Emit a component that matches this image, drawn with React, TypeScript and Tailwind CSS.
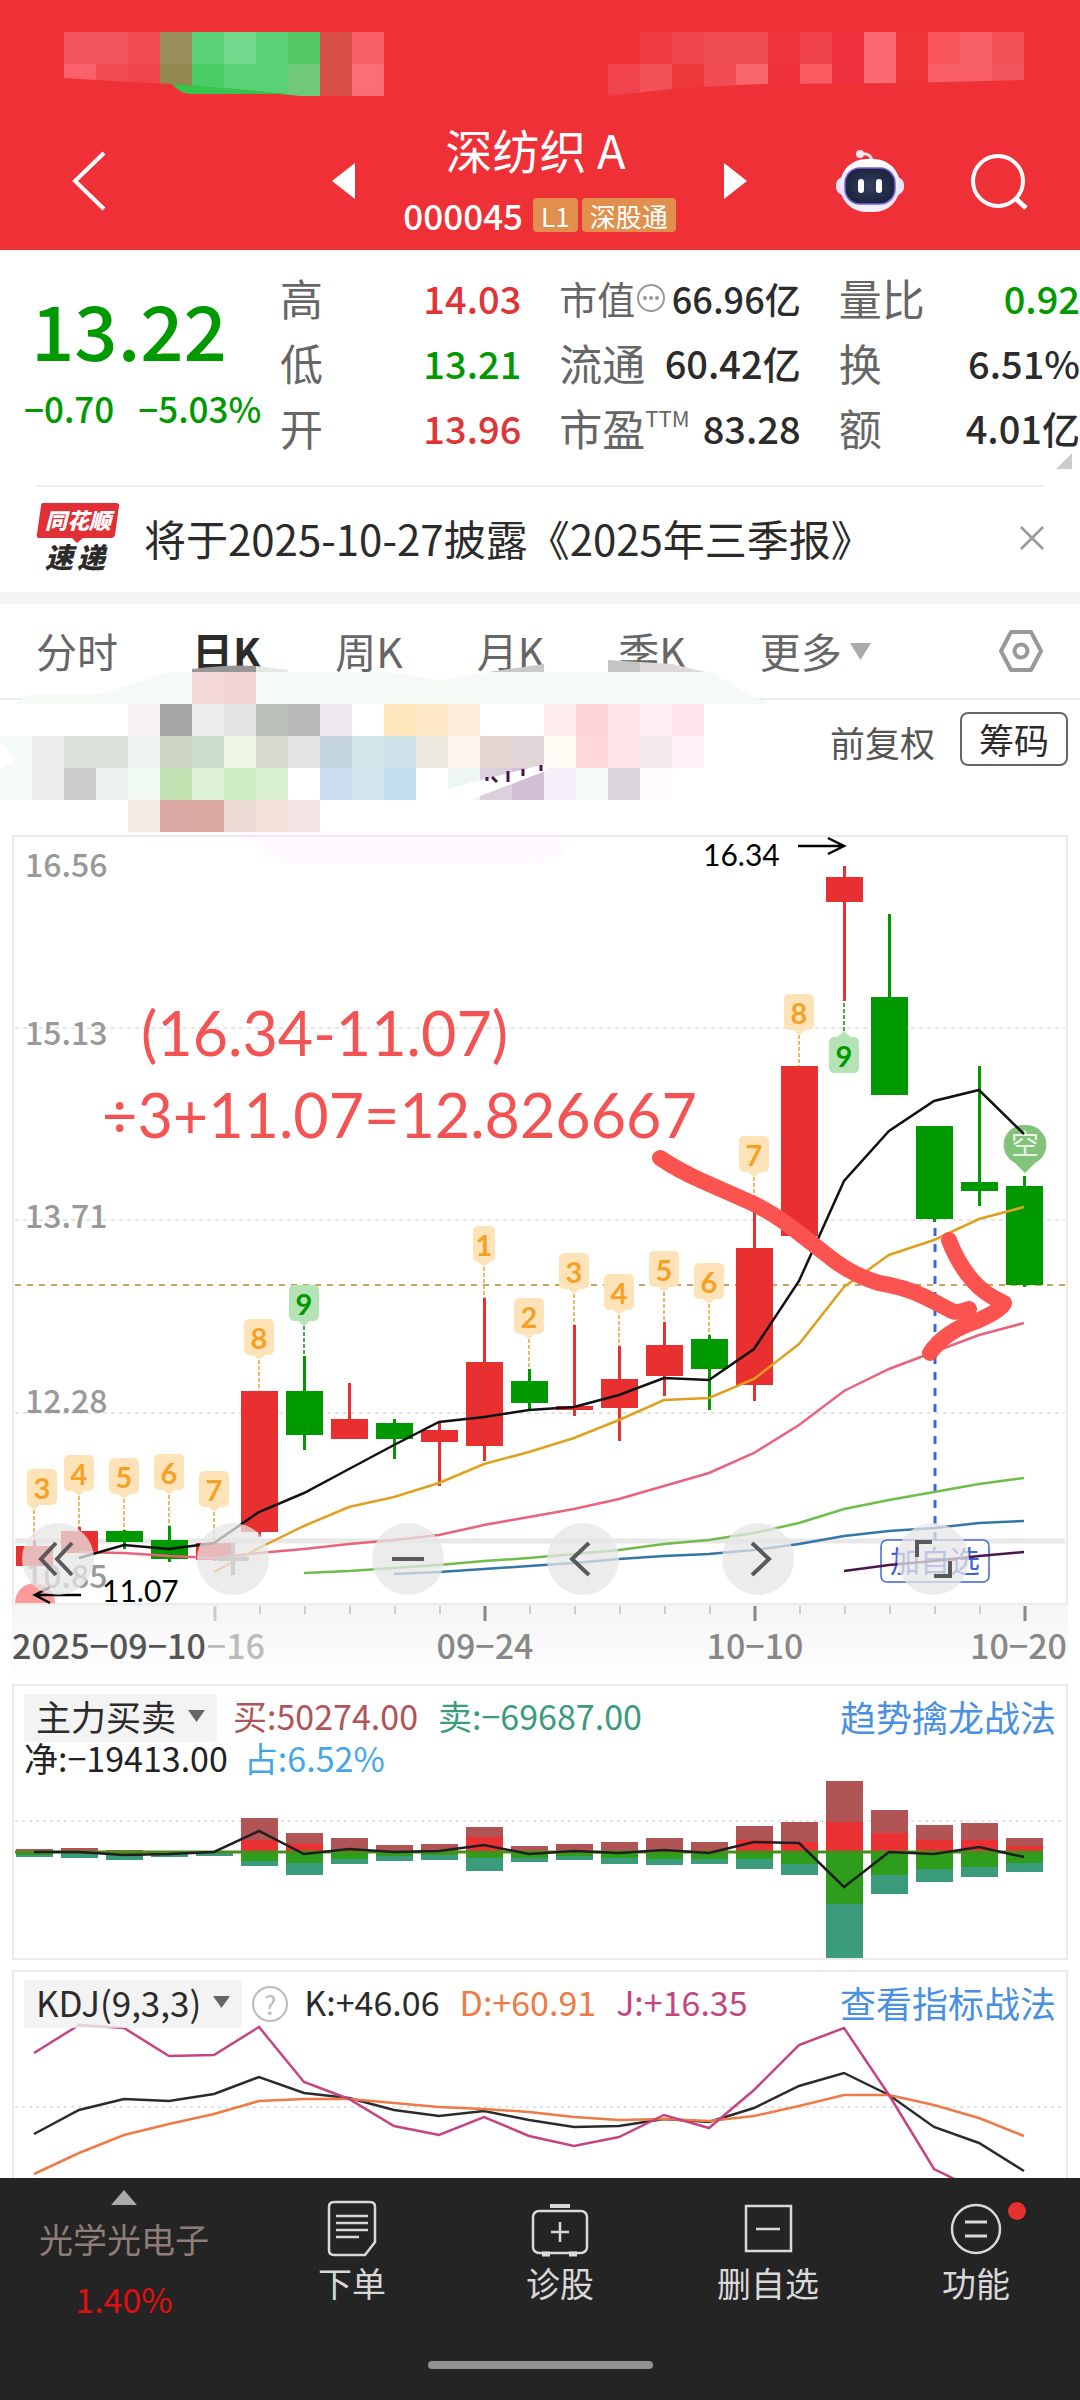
import type { ReactNode } from "react";

type Candle = { up: boolean; top: number; bottom: number; high: number; low: number };
type Tag = { i: number; n: number; y: number; to: number; green?: boolean; flip?: boolean };
type Bar = { buy: number; bigBuy: number; bigSell: number; sell: number };

const STEP = 45;
const BODY = 37;
const xAt = (i: number) => 34 + i * STEP;
const points = (ys: number[], from = 0) => ys.map((y, i) => `${xAt(i + from)},${y}`).join(" ");

const candles: Candle[] = [
  { up: true, top: 1546, bottom: 1566, high: 1540, low: 1566 },
  { up: true, top: 1531, bottom: 1553, high: 1527, low: 1553 },
  { up: false, top: 1531, bottom: 1542, high: 1530, low: 1549 },
  { up: false, top: 1540, bottom: 1559, high: 1526, low: 1562 },
  { up: true, top: 1543, bottom: 1560, high: 1543, low: 1561 },
  { up: true, top: 1391, bottom: 1532, high: 1391, low: 1537 },
  { up: false, top: 1391, bottom: 1435, high: 1356, low: 1450 },
  { up: true, top: 1419, bottom: 1439, high: 1383, low: 1439 },
  { up: false, top: 1423, bottom: 1439, high: 1419, low: 1459 },
  { up: true, top: 1430, bottom: 1442, high: 1423, low: 1486 },
  { up: true, top: 1362, bottom: 1446, high: 1298, low: 1461 },
  { up: false, top: 1381, bottom: 1403, high: 1369, low: 1409 },
  { up: true, top: 1406, bottom: 1410, high: 1325, low: 1416 },
  { up: true, top: 1379, bottom: 1408, high: 1346, low: 1441 },
  { up: true, top: 1345, bottom: 1376, high: 1322, low: 1396 },
  { up: false, top: 1339, bottom: 1369, high: 1335, low: 1410 },
  { up: true, top: 1248, bottom: 1385, high: 1212, low: 1401 },
  { up: true, top: 1066, bottom: 1236, high: 1066, low: 1236 },
  { up: true, top: 877, bottom: 902, high: 866, low: 1001 },
  { up: false, top: 997, bottom: 1095, high: 914, low: 1095 },
  { up: false, top: 1126, bottom: 1219, high: 1126, low: 1222 },
  { up: false, top: 1182, bottom: 1191, high: 1066, low: 1206 },
  { up: false, top: 1186, bottom: 1285, high: 1176, low: 1287 },
];

const averages = [
  { color: "#e8637b", from: 1, ys: [1552, 1553, 1556, 1558, 1553, 1549, 1544, 1540, 1535, 1525, 1517, 1509, 1499, 1486, 1473, 1453, 1425, 1391, 1369, 1352, 1335, 1323] },
  { color: "#6fbe4b", from: 6, ys: [1573, 1571, 1568, 1565, 1561, 1558, 1554, 1550, 1544, 1540, 1533, 1523, 1509, 1500, 1492, 1484, 1478] },
  { color: "#3376a8", from: 8, ys: [1574, 1572, 1569, 1566, 1563, 1559, 1556, 1554, 1550, 1544, 1536, 1531, 1528, 1523, 1521] },
  { color: "#4a154b", from: 18, ys: [1571, 1565, 1561, 1556, 1552] },
  { color: "#e0a020", from: 4, ys: [1572, 1548, 1526, 1507, 1497, 1483, 1464, 1452, 1438, 1420, 1400, 1398, 1379, 1344, 1287, 1255, 1240, 1219, 1207] },
  { color: "#111111", from: 1, ys: [1558, 1545, 1549, 1543, 1512, 1493, 1469, 1445, 1422, 1417, 1410, 1407, 1395, 1378, 1380, 1349, 1281, 1181, 1131, 1101, 1090, 1134] },
];

const tags: Tag[] = [
  { i: 0, n: 3, y: 1469, to: 1540 },
  { i: 1, n: 4, y: 1455, to: 1527 },
  { i: 2, n: 5, y: 1458, to: 1530 },
  { i: 3, n: 6, y: 1454, to: 1526 },
  { i: 4, n: 7, y: 1471, to: 1543 },
  { i: 5, n: 8, y: 1319, to: 1391 },
  { i: 6, n: 9, y: 1285, to: 1356, green: true },
  { i: 10, n: 1, y: 1226, to: 1298 },
  { i: 11, n: 2, y: 1298, to: 1369 },
  { i: 12, n: 3, y: 1253, to: 1325 },
  { i: 13, n: 4, y: 1274, to: 1346 },
  { i: 14, n: 5, y: 1251, to: 1322 },
  { i: 15, n: 6, y: 1263, to: 1335 },
  { i: 16, n: 7, y: 1136, to: 1212 },
  { i: 17, n: 8, y: 994, to: 1066 },
  { i: 18, n: 9, y: 1037, to: 1001, green: true, flip: true },
];

const bars: Bar[] = [
  { buy: 1849, bigBuy: 1852, bigSell: 1855, sell: 1857 },
  { buy: 1848, bigBuy: 1851, bigSell: 1854, sell: 1858 },
  { buy: 1850, bigBuy: 1852, bigSell: 1855, sell: 1860 },
  { buy: 1851, bigBuy: 1852, bigSell: 1854, sell: 1857 },
  { buy: 1851, bigBuy: 1852, bigSell: 1853, sell: 1856 },
  { buy: 1818, bigBuy: 1840, bigSell: 1861, sell: 1866 },
  { buy: 1833, bigBuy: 1844, bigSell: 1863, sell: 1875 },
  { buy: 1838, bigBuy: 1850, bigSell: 1859, sell: 1864 },
  { buy: 1845, bigBuy: 1851, bigSell: 1856, sell: 1861 },
  { buy: 1844, bigBuy: 1851, bigSell: 1855, sell: 1860 },
  { buy: 1827, bigBuy: 1837, bigSell: 1858, sell: 1871 },
  { buy: 1846, bigBuy: 1851, bigSell: 1858, sell: 1862 },
  { buy: 1844, bigBuy: 1850, bigSell: 1856, sell: 1860 },
  { buy: 1842, bigBuy: 1851, bigSell: 1858, sell: 1864 },
  { buy: 1838, bigBuy: 1850, bigSell: 1859, sell: 1865 },
  { buy: 1842, bigBuy: 1850, bigSell: 1859, sell: 1864 },
  { buy: 1826, bigBuy: 1840, bigSell: 1859, sell: 1869 },
  { buy: 1822, bigBuy: 1842, bigSell: 1864, sell: 1875 },
  { buy: 1781, bigBuy: 1822, bigSell: 1904, sell: 1958 },
  { buy: 1810, bigBuy: 1833, bigSell: 1875, sell: 1894 },
  { buy: 1825, bigBuy: 1840, bigSell: 1869, sell: 1882 },
  { buy: 1823, bigBuy: 1840, bigSell: 1867, sell: 1877 },
  { buy: 1838, bigBuy: 1846, bigSell: 1863, sell: 1872 },
];
const netFlow = [1852, 1852, 1855, 1854, 1852, 1831, 1854, 1849, 1852, 1851, 1845, 1854, 1851, 1853, 1850, 1853, 1842, 1843, 1887, 1852, 1854, 1847, 1857];

const kdj = [
  { color: "#2b2b2b", ys: [2134, 2110, 2099, 2101, 2094, 2077, 2093, 2098, 2110, 2116, 2111, 2120, 2127, 2126, 2119, 2122, 2108, 2086, 2073, 2095, 2127, 2143, 2171] },
  { color: "#ee7a45", ys: [2174, 2153, 2135, 2124, 2114, 2101, 2099, 2099, 2103, 2107, 2109, 2112, 2117, 2120, 2119, 2121, 2116, 2106, 2095, 2095, 2105, 2118, 2136] },
  { color: "#c64580", ys: [2053, 2025, 2028, 2056, 2055, 2027, 2082, 2099, 2126, 2135, 2117, 2136, 2146, 2137, 2115, 2128, 2090, 2045, 2028, 2095, 2169, 2191, 2200] },
];

// One colour per 32px block, null leaves the block empty
const statusLeft = [
  ["#f2565c", "#f2565c", "#f04b52", "#9a8f5c", "#5bd177", "#73da8d", "#5bd177", "#54c765", "#d74f46", "#f95f66"],
  ["#f9626a", "#f04c52", "#f0434a", "#948850", "#4acd66", "#5bd177", "#5bd177", "#70c97b", "#d74f46", "#fa6e76"],
];
const statusRight = [
  [null, "#f03a41", "#f0464d", "#f04d53", "#f04d53", "#ee363c", "#ef4148", "#ee303d", "#fb6a70", "#ee3439", "#f9575d", "#f96066", "#f35057"],
  ["#f0434b", "#f25258", "#ee383c", "#f14c52", "#f96669", "#ee303a", "#f95b61", "#ee303d", "#fb6a70", "#ee3439", "#f95f66", "#f95f66", "#f2555c"],
];
const legendBlocks = [
  [null, null, null, null, null, null, "#f6dadb", "#f4d3d3"],
  [null, null, null, null, "#f6f2f6", "#a7a5a8", "#ededee", "#e3e4e4", "#bac1ba", "#b9b8ba", "#eee8ee", null, "#fee6bd", "#fde7c5", "#fdedda", null, null, "#feeced", "#ffd3da", "#ffe6eb", "#fff0f4", "#fee6ec"],
  ["#f5fbf8", "#eeeeee", "#dae1da", "#dae1da", "#edf3ee", "#cdd5c4", "#cdddcb", "#edf6e5", "#d6d9cb", "#e4e4e5", "#c3d4dc", "#d3e5eb", "#cfe2ea", "#ebe9de", "#fef4ee", "#e5d5cf", "#e3d6d9", "#fffaf4", "#ffd8dd", "#ffe6ea", "#f5eaef", "#fff1f5"],
  ["#f5fbf8", "#eeeeee", "#cccccc", "#ebf1ed", "#f0faf0", "#c3e4b2", "#dcf1d6", "#cdedc4", "#daf1d2", null, "#cbdeef", "#d5e6ef", "#c2ddee", null, "#edf6f5", "#dccfde", "#d3bfd5", "#f5edf7", "#f5fbf8", "#dbd4dc", "#fffbff"],
  [null, null, null, null, "#f5e9e6", "#dba8a4", "#dba99f", "#ebdad3", "#f4e1da", "#f5e4e5"],
];

function Blocks({ rows, x, y }: { rows: (string | null)[][]; x: number; y: number }) {
  return (
    <g shapeRendering="crispEdges">
      {rows.map((row, r) =>
        row.map((fill, c) => fill && <rect key={`${r}-${c}`} x={x + c * 32} y={y + r * 32} width="32" height="32" fill={fill} />)
      )}
    </g>
  );
}

function Header() {
  return (
    <header className="bg-[#f03037] text-white">
      <svg viewBox="0 0 1080 112" className="block w-full" aria-hidden="true">
        <Blocks rows={statusLeft} x={64} y={32} />
        <Blocks rows={statusRight} x={608} y={32} />
        <path d="M64 78 L128 82 L172 84 L250 91 L310 97 H64Z" fill="#f03037" />
        <path d="M172 84 Q180 94 192 94 H290 L310 96 L250 90 Z" fill="#36c44c" />
        <path d="M608 96 L680 88 L760 84 L900 83 L1024 80 V98 H608Z" fill="#f03037" />
      </svg>
      <div className="flex h-[138px]">
        <div className="flex w-[355px] items-center justify-between pl-[72px]">
          <button aria-label="返回">
            <svg width="34" height="60" viewBox="0 0 34 60" fill="none" stroke="#fff" strokeWidth="4">
              <path d="M32 2 L3 30 L32 58" />
            </svg>
          </button>
          <button aria-label="上一只">
            <svg width="23" height="36" viewBox="0 0 23 36" fill="#fff"><path d="M23 0 V36 L0 18Z" /></svg>
          </button>
        </div>
        <div className="flex flex-1 flex-col items-center pt-1">
          <h1 className="pr-2 text-[47px] leading-[66px]">深纺织 A</h1>
          <div className="mt-4 flex h-[34px] items-center gap-1">
            <span className="mr-1.5 text-[35px] font-medium">000045</span>
            <span className="flex h-[34px] items-center rounded bg-[#e0904c] px-2 text-[26px]">L1</span>
            <span className="flex h-[34px] items-center rounded bg-[#e0904c] px-2 text-[26px]">深股通</span>
          </div>
        </div>
        <div className="flex w-[356px] items-center">
          <button aria-label="下一只">
            <svg width="23" height="36" viewBox="0 0 23 36" fill="#fff"><path d="M0 0 V36 L23 18Z" /></svg>
          </button>
          <button aria-label="智能助手" className="ml-[89px]">
            <svg width="68" height="64" viewBox="0 0 68 64">
              <defs>
                <linearGradient id="shell" x1="0" y1="0" x2="0" y2="1">
                  <stop offset="0" stopColor="#ffffff" />
                  <stop offset="0.7" stopColor="#e6e2fa" />
                  <stop offset="1" stopColor="#f7f1fb" />
                </linearGradient>
                <radialGradient id="visor">
                  <stop offset="0" stopColor="#34405c" />
                  <stop offset="1" stopColor="#1b2540" />
                </radialGradient>
              </defs>
              <path d="M24 5 Q36 3 36 14" fill="none" stroke="#f5e3ea" strokeWidth="3" />
              <circle cx="24" cy="5" r="4" fill="#fbe9ee" />
              <rect x="0" y="28" width="68" height="18" rx="8" fill="#e9e4fa" />
              <rect x="4" y="10" width="60" height="53" rx="26" fill="url(#shell)" />
              <rect x="9" y="19" width="50" height="36" rx="15" fill="url(#visor)" stroke="#7a63d8" strokeWidth="1.5" />
              <rect x="22" y="30" width="6" height="14" rx="3" fill="#fff" />
              <rect x="40" y="30" width="6" height="14" rx="3" fill="#fff" />
            </svg>
          </button>
          <button aria-label="搜索" className="ml-[66px]">
            <svg width="58" height="58" viewBox="0 0 58 58" fill="none" stroke="#fff" strokeWidth="4">
              <circle cx="28" cy="29" r="25" />
              <path d="M45 46 L56 56" strokeWidth="5" />
            </svg>
          </button>
        </div>
      </div>
    </header>
  );
}

function Stat({ label, value, color = "text-[#2b2b2b]", small = false }: { label: ReactNode; value: string; color?: string; small?: boolean }) {
  return (
    <div className="flex h-[65px] items-center justify-between whitespace-nowrap">
      <dt className={`flex items-center text-[#666] ${small ? "text-[38px]" : "text-[43px]"}`}>{label}</dt>
      <dd className={`font-medium ${small ? "text-[36px]" : "text-[38px]"} ${color}`}>{value}</dd>
    </div>
  );
}

function Quote() {
  return (
    <section className="relative flex h-[235px]">
      <div className="w-[280px] pt-7 text-[#009900]">
        <div className="pl-[31px] text-[76px] font-medium leading-[100px]">13.22</div>
        <div className="flex gap-6 pl-6 text-[35px] font-medium leading-[60px]">
          <span>−0.70</span>
          <span>−5.03%</span>
        </div>
      </div>
      <dl className="flex flex-1 gap-[38px] pt-[15px]">
        <div className="flex-1">
          <Stat label="高" value="14.03" color="text-[#e03437]" />
          <Stat label="低" value="13.21" color="text-[#009900]" />
          <Stat label="开" value="13.96" color="text-[#e03437]" />
        </div>
        <div className="flex-1">
          <Stat
            small
            value="66.96亿"
            label={
              <>
                市值
                <svg width="28" height="32" viewBox="0 0 28 32" className="ml-0.5">
                  <circle cx="14" cy="16" r="13" fill="none" stroke="#999" strokeWidth="2" />
                  <circle cx="8" cy="16" r="2" fill="#999" />
                  <circle cx="14" cy="16" r="2" fill="#999" />
                  <circle cx="20" cy="16" r="2" fill="#999" />
                </svg>
              </>
            }
          />
          <Stat label="流通" value="60.42亿" />
          <Stat label={<>市盈<sup className="text-[22px]">TTM</sup></>} value="83.28" />
        </div>
        <div className="flex-1">
          <Stat label="量比" value="0.92" color="text-[#009900]" />
          <Stat label="换" value="6.51%" />
          <Stat label="额" value="4.01亿" />
        </div>
      </dl>
      <svg width="16" height="16" viewBox="0 0 16 16" className="absolute bottom-4 right-2"><path d="M16 0 V16 H0Z" fill="#ccc" /></svg>
    </section>
  );
}

function Notice() {
  return (
    <section className="mx-9 flex h-[107px] items-center border-t-2 border-[#efefef] pb-1">
      <svg width="84" height="76" viewBox="0 0 84 76" className="overflow-visible font-black italic" role="img" aria-label="同花顺速递">
        <path d="M7 3 H80 Q84 3 83 6 L79 35 Q78 38 75 38 H47 L41 43 L36 38 H4 Q0 38 1 34 L5 6 Q5 3 7 3Z" fill="#e22f35" />
        <text x="9" y="29" fontSize="22" fill="#fff">同花顺</text>
        <text x="9" y="68" fontSize="28" fill="#2b2b2b">速</text>
        <text x="41" y="68" fontSize="28" fill="#2b2b2b">递</text>
      </svg>
      <p className="ml-6 flex-1 whitespace-nowrap text-[42px] leading-[60px] text-[#2b2b2b]">将于2025-10-27披露《2025年三季报》</p>
      <button aria-label="关闭">
        <svg width="24" height="24" viewBox="0 0 24 24" stroke="#999" strokeWidth="2.5"><path d="M1 1 L23 23 M23 1 L1 23" /></svg>
      </button>
    </section>
  );
}

function Periods() {
  return (
    <nav className="flex h-24 items-center border-b-2 border-[#ebebeb] px-9 text-[41px] text-[#666]">
      <div className="flex flex-1 gap-[74px] whitespace-nowrap">
        <button>分时</button>
        <button className="font-bold text-[#2b2b2b]">日K</button>
        <button>周K</button>
        <button>月K</button>
        <button>季K</button>
        <button className="flex items-center gap-2">
          更多
          <svg width="21" height="17" viewBox="0 0 21 17" fill="#aaa"><path d="M0 0 H21 L10.5 17Z" /></svg>
        </button>
      </div>
      <button aria-label="设置">
        <svg width="46" height="44" viewBox="0 0 46 44" fill="none" stroke="#999" strokeWidth="4" strokeLinejoin="round">
          <path d="M13 3 H33 L43 22 L33 41 H13 L3 22Z" />
          <circle cx="23" cy="22" r="6.5" />
        </svg>
      </button>
    </nav>
  );
}

function ChartLegend() {
  return (
    <div className="flex h-[135px] items-start justify-end gap-[25px] pr-3 pt-3 text-[35px]">
      <span className="leading-[60px] text-[#555]">前复权</span>
      <button className="h-[54px] rounded-lg border-2 border-[#666] px-[17px] leading-[48px] text-[#2b2b2b]">筹码</button>
    </div>
  );
}

// Pixel blocks and brush marks lying over the tabs and the legend
function LegendCover() {
  return (
    <svg viewBox="0 604 1080 270" className="pointer-events-none absolute left-0 top-0 w-full" aria-hidden="true">
      <path d="M14 704 L28 695 H95 L130 685 L170 672 H385 L440 680 L490 672 H712 L740 690 L770 704Z" fill="#f5faf7" />
      <path d="M192 672 V669 Q230 664 256 666 V672Z" fill="#979797" />
      <path d="M256 672 V666 L288 670 V672Z" fill="#e3e8e5" />
      <path d="M488 672 L544 664 V672Z" fill="#c9c9c9" />
      <path d="M608 672 V660 L640 662 V672Z" fill="#c4c4c4" />
      <path d="M640 672 V662 L672 664 L706 672Z" fill="#dedada" />
      <path d="M105 832 H576 L560 858 Q545 864 520 864 H290 Q270 860 248 838 L105 833Z" fill="#fffaff" />
      <Blocks rows={legendBlocks} x={0} y={672} />
      <path d="M0 740 L14 760 L0 770Z" fill="#fff" />
      <path d="M446 800 V789 L545 764 L548 770 L470 800Z" fill="#fff" />
      <path d="M487 781 V777 M492 777 L497 782 M508 782 V771 M523 776 V769 M541 771 V765" fill="none" stroke="#4a154b" strokeWidth="3" />
    </svg>
  );
}

function TagMark({ tag }: { tag: Tag }) {
  const x = xAt(tag.i);
  const color = tag.green ? "#009900" : "#f5a125";
  const half = tag.n === 1 ? 11 : 15;
  const cx = tag.i === 0 ? x + 8 : x;
  const tip = tag.flip ? tag.y - 6 : tag.y + 41;
  const base = tag.flip ? tag.y + 1 : tag.y + 34;
  return (
    <g>
      <line x1={x} x2={x} y1={tip} y2={tag.to} stroke={tag.green ? "#178a1c" : "#dfa63a"} strokeWidth="1.5" strokeDasharray="4 2" />
      <g fill={tag.green ? "#b5e3b5" : "#ffe3b8"}>
        <rect x={cx - half} y={tag.y} width={half * 2} height="36" rx="5" />
        <path d={`M${x - 8} ${base} L${x} ${tip} L${x + 8} ${base}Z`} />
      </g>
      <text x={cx} y={tag.y + 30} textAnchor="middle" fontSize="29" fill={color} className="font-['Lato',sans-serif] font-bold">{tag.n}</text>
    </g>
  );
}

function ChartTools() {
  const icons = [
    { label: "最左", d: "M34 20 L19 36 L34 52 M50 20 L35 36 L50 52", color: "#5a5a5a" },
    { label: "放大", d: "M20 36 H52 M36 20 V52", color: "#cfcfcf" },
    { label: "缩小", d: "M20 36 H52", color: "#5a5a5a" },
    { label: "左移", d: "M42 20 L25 36 L42 52", color: "#5a5a5a" },
    { label: "右移", d: "M30 20 L47 36 L30 52", color: "#5a5a5a" },
    { label: "全屏", d: "M20 34 V19 H35 M37 53 H53 V38", color: "#5a5a5a" },
  ];
  return (
    <div className="absolute bottom-2 left-2 flex gap-[103px]">
      {icons.map((icon) => (
        <button key={icon.label} aria-label={icon.label} className="size-[72px] rounded-full bg-[#e6e6e6]/75">
          <svg width="72" height="72" viewBox="0 0 72 72" fill="none" stroke={icon.color} strokeWidth="4"><path d={icon.d} /></svg>
        </button>
      ))}
    </div>
  );
}

function CandleChart() {
  return (
    <section className="relative mx-3 border-2 border-[#ebebeb]">
      <svg viewBox="14 837 1052 766" className="block w-full overflow-visible">
        {[1028, 1220, 1413].map((y) => (
          <line key={y} x1="15" x2="1065" y1={y} y2={y} stroke="#dcdcdc" strokeWidth="1.5" strokeDasharray="4 4" />
        ))}
        <g fontSize="32" fill="#999" className="font-medium">
          <text x="25" y="877">16.56</text>
          <text x="25" y="1045">15.13</text>
          <text x="25" y="1228">13.71</text>
          <text x="25" y="1413">12.28</text>
          <text x="25" y="1588">10.85</text>
        </g>
        <line x1="15" x2="1065" y1="1541" y2="1541" stroke="#e8e8e8" strokeWidth="5" />
        <line x1="15" x2="1065" y1="1285" y2="1285" stroke="#c9a45c" strokeWidth="2" strokeDasharray="6 6" />
        {candles.map((c, i) => (
          <g key={i} fill={c.up ? "#e83030" : "#009900"} shapeRendering="crispEdges">
            <rect x={xAt(i) - 1} y={c.high} width="3" height={c.low - c.high} />
            <rect x={xAt(i) - 18} y={c.top} width={BODY} height={c.bottom - c.top} />
          </g>
        ))}
        {tags.map((tag) => <TagMark key={tag.i} tag={tag} />)}
        <line x1="935" x2="935" y1="1228" y2="1540" stroke="#3c63dc" strokeWidth="3" strokeDasharray="8 8" />
        <rect x="881" y="1540" width="108" height="42" rx="6" fill="#fff" stroke="#3c63dc" strokeWidth="1.5" />
        <text x="935" y="1572" textAnchor="middle" fontSize="30" fill="#3c63dc">加自选</text>
        <path d="M1025 1125 a20 20 0 0 1 10 38 L1025 1173 L1015 1163 a20 20 0 0 1 10 -38Z" fill="#83c27a" />
        <text x="1025" y="1155" textAnchor="middle" fontSize="28" fill="#e6f7e3">空</text>
        <path d="M15 1603 A20 20 0 0 1 55 1603Z" fill="#ff9a9a" />
        {averages.map((line) => (
          <polyline key={line.color} points={points(line.ys, line.from)} fill="none" stroke={line.color} strokeWidth="2.5" />
        ))}
        <g fontSize="30" fill="#000" className="font-['Lato',sans-serif]">
          <text x="703" y="866">16.34</text>
          <text x="102" y="1602">11.07</text>
        </g>
        <path d="M798 846 H844 M828 838 L844 846 L828 854 M81 1595 H35 M50 1587 L35 1595 L50 1603" fill="none" stroke="#000" strokeWidth="2.5" />
        <g fontSize="61" fill="#f35453" className="font-['Lato',sans-serif]">
          <text x="141" y="1056">(16.34-11.07)</text>
          <text x="102" y="1138">÷3+11.07=12.826667</text>
        </g>
        <g fill="none" stroke="#fb5350" strokeWidth="16" strokeLinecap="round" strokeLinejoin="round">
          <path d="M660 1158 Q678 1170 700 1180 L752 1203 Q775 1214 800 1234 L836 1262 Q856 1276 879 1283 Q905 1287 925 1297 L950 1310 Q956 1314 969 1309" />
          <path d="M949 1240 Q958 1264 973 1281 Q984 1294 1004 1303 Q1002 1310 977 1321 Q945 1331 930 1353" />
        </g>
      </svg>
      <ChartTools />
    </section>
  );
}

function DateAxis() {
  return (
    <div className="mx-3 bg-linear-to-b from-[#f5f5f5] to-white">
      <svg viewBox="12 1605 1056 79" className="block w-full font-medium" fontSize="34" fill="#888">
        {candles.map((_, i) => {
          if (i < 4) return null;
          const major = i % 6 === 4;
          return <line key={i} x1={xAt(i) + 1} x2={xAt(i) + 1} y1="1606" y2={major ? 1621 : 1614} stroke={major && i > 4 ? "#888" : "#ccc"} strokeWidth={major ? 3 : 2} />;
        })}
        <text x="12" y="1659" fill="#555">2025−09−10</text>
        <text x="265" y="1659" textAnchor="end" fill="#bbb">−16</text>
        <text x="485" y="1659" textAnchor="middle">09−24</text>
        <text x="755" y="1659" textAnchor="middle">10−10</text>
        <text x="1067" y="1659" textAnchor="end">10−20</text>
      </svg>
    </div>
  );
}

function IndicatorButton({ children }: { children: ReactNode }) {
  return (
    <button className="flex h-12 items-center gap-3 rounded bg-[#f0f0f0]/80 px-3 pb-1 text-[35px] leading-[44px] text-[#2b2b2b]">
      {children}
      <svg width="17" height="12" viewBox="0 0 17 12" fill="#666"><path d="M0 0 H17 L8.5 12Z" /></svg>
    </button>
  );
}

function FlowPanel() {
  return (
    <section className="relative mx-3 border-2 border-[#ebebeb]">
      <svg viewBox="14 1686 1052 272" className="block w-full">
        <line x1="15" x2="1065" y1="1821" y2="1821" stroke="#e2e2e2" strokeWidth="2" strokeDasharray="3 4" />
        {bars.map((b, i) => (
          <g key={i} shapeRendering="crispEdges">
            <rect x={xAt(i) - 18} y={b.buy} width={BODY} height={b.bigBuy - b.buy} fill="#b05456" />
            <rect x={xAt(i) - 18} y={b.bigBuy} width={BODY} height={1852 - b.bigBuy} fill="#ea3232" />
            <rect x={xAt(i) - 18} y="1852" width={BODY} height={b.bigSell - 1852} fill="#2f9d1c" />
            <rect x={xAt(i) - 18} y={b.bigSell} width={BODY} height={b.sell - b.bigSell} fill="#3a9b7d" />
          </g>
        ))}
        <line x1="15" x2="1043" y1="1852" y2="1852" stroke="#4c8c1e" strokeWidth="3" />
        <polyline points={points(netFlow)} fill="none" stroke="#1f1f1f" strokeWidth="2.5" />
      </svg>
      <div className="absolute inset-x-0 top-0 whitespace-nowrap px-2.5 pt-2 text-[34px] leading-[44px]">
        <div className="flex h-12 items-center">
          <IndicatorButton>主力买卖</IndicatorButton>
          <span className="ml-4 pb-1 text-[#b05456]">买:50274.00</span>
          <span className="ml-5 pb-1 text-[#3a9b7d]">卖:−69687.00</span>
          <a href="#trend" className="ml-auto pb-1 text-[36px] text-[#4a90e2]">趋势擒龙战法</a>
        </div>
        <div className="flex gap-4 leading-8">
          <span className="text-[#222]">净:−19413.00</span>
          <span className="text-[#45a6e6]">占:6.52%</span>
        </div>
      </div>
    </section>
  );
}

function KdjPanel() {
  return (
    <section className="relative mx-3 mt-2.5 border-2 border-b-0 border-[#ebebeb]">
      <svg viewBox="14 1972 1052 206" className="block w-full">
        <line x1="15" x2="1065" y1="2107" y2="2107" stroke="#e2e2e2" strokeWidth="2" strokeDasharray="3 4" />
        {kdj.map((line) => (
          <polyline key={line.color} points={points(line.ys)} fill="none" stroke={line.color} strokeWidth="2.5" />
        ))}
      </svg>
      <div className="absolute inset-x-0 top-0 flex items-center whitespace-nowrap px-2.5 pt-2 text-[34px] leading-[44px]">
        <IndicatorButton>KDJ(9,3,3)</IndicatorButton>
        <button aria-label="说明" className="ml-2.5 size-9 rounded-full border-2 border-[#bbb] text-[26px] leading-8 text-[#bbb]">?</button>
        <span className="ml-4 pb-1 text-[#2b2b2b]">K:+46.06</span>
        <span className="ml-5 pb-1 text-[#ee7a45]">D:+60.91</span>
        <span className="ml-5 pb-1 text-[#c64580]">J:+16.35</span>
        <a href="#kdj" className="ml-auto pb-1 text-[36px] text-[#4a90e2]">查看指标战法</a>
      </div>
    </section>
  );
}

function NavItem({ label, dot = false, children }: { label: string; dot?: boolean; children: ReactNode }) {
  return (
    <button className="flex flex-1 flex-col items-center">
      <span className="relative mt-5 block">
        <svg width="60" height="60" viewBox="0 0 60 60" fill="none" stroke="#d8d8d8" strokeWidth="2.5" className="block">{children}</svg>
        {dot && <span className="absolute -right-5 top-1 size-[18px] rounded-full bg-[#e83030]" />}
      </span>
      <span className="leading-[50px]">{label}</span>
    </button>
  );
}

function BottomBar() {
  return (
    <footer className="flex h-[222px] flex-col bg-[#242424] text-[34px] text-[#d8d8d8]">
      <nav className="flex flex-1">
        <button className="flex w-[248px] flex-col items-center pt-3">
          <svg width="26" height="15" viewBox="0 0 26 15" fill="#aaa"><path d="M13 0 L26 15 H0Z" /></svg>
          <span className="mt-1 leading-[60px] text-[#8f7d78]">光学光电子</span>
          <span className="leading-[60px] text-[#e00f0f]">1.40%</span>
        </button>
        <NavItem label="下单">
          <path d="M12 4 H48 Q53 4 53 9 V44 L43 57 H12 Q7 57 7 52 V9 Q7 4 12 4Z" />
          <path d="M14 18 H46 M14 25 H46 M14 32 H46 M14 39 H37" />
        </NavItem>
        <NavItem label="诊股">
          <rect x="3" y="13" width="54" height="42" rx="6" />
          <path d="M20 8 H40" strokeWidth="4" />
          <path d="M30 24 V44 M21 34 H39" />
          <path d="M12 56 H20 M39 56 H47" strokeWidth="5" />
        </NavItem>
        <NavItem label="删自选">
          <rect x="8" y="8" width="45" height="45" />
          <path d="M18 31 H42" />
        </NavItem>
        <NavItem label="功能" dot>
          <circle cx="30" cy="31" r="24" />
          <path d="M19 24 H41 M19 38 H41" strokeWidth="3" />
        </NavItem>
      </nav>
      <div className="mx-auto mb-[31px] h-2 w-[225px] rounded-full bg-[#919191]" />
    </footer>
  );
}

export default function App() {
  return (
    <main className="min-h-screen bg-white font-['Noto_Sans_CJK_SC','Roboto',sans-serif]">
      <Header />
      <Quote />
      <Notice />
      <div className="h-3 bg-[#f5f5f5]" />
      <div className="relative">
        <Periods />
        <ChartLegend />
        <LegendCover />
      </div>
      <CandleChart />
      <DateAxis />
      <FlowPanel />
      <KdjPanel />
      <BottomBar />
    </main>
  );
}
